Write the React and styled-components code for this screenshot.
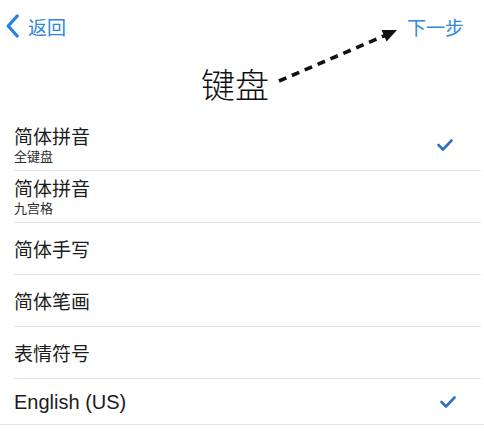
import React from "react";
import styled, { createGlobalStyle } from "styled-components";

const GlobalStyle = createGlobalStyle`
  html, body {
    margin: 0;
    padding: 0;
    background: #ffffff;
  }
  body {
    font-family: "Liberation Sans", "Noto Sans CJK SC", sans-serif;
  }
`;

const StyledPage = styled.div`
  width: 484px;
  height: 431px;
  overflow: hidden;
  background-color: #ffffff;
`;

const StyledHeader = styled.div`
  position: relative;
  height: 119px;
  display: flex;
  flex-direction: column;
`;

const StyledNavBar = styled.div`
  height: 52px;
  display: flex;
  align-items: center;
  justify-content: space-between;
  padding: 0 20px 0 6px;
  box-sizing: border-box;
`;

const StyledNavButton = styled.div`
  display: flex;
  align-items: center;
  gap: 9px;
  font-family: "Noto Sans CJK SC", sans-serif;
  font-size: 19px;
  color: #2f86de;
  line-height: 1;
`;

const StyledTitle = styled.div`
  flex: 1;
  display: flex;
  align-items: center;
  justify-content: center;
  padding-right: 14px;
  padding-bottom: 4px;
  font-family: "Noto Sans CJK SC", sans-serif;
  font-size: 34px;
  font-weight: 300;
  color: #111111;
`;

const StyledArrow = styled.svg`
  position: absolute;
  left: 0;
  top: 0;
  pointer-events: none;
`;

const StyledList = styled.div`
  display: flex;
  flex-direction: column;
`;

const StyledRow = styled.div`
  height: ${(p) => (p.$last ? 46 : 52)}px;
  margin-left: ${(p) => (p.$last ? 0 : 14)}px;
  padding-left: ${(p) => (p.$last ? 14 : 0)}px;
  padding-right: 28px;
  margin-right: ${(p) => (p.$last ? 0 : 3)}px;
  box-sizing: border-box;
  display: flex;
  align-items: center;
  justify-content: space-between;
  border-bottom: 1px solid #e4e4e4;
`;

const StyledLabels = styled.div`
  display: flex;
  flex-direction: column;
  gap: 4px;
`;

const StyledLabel = styled.div`
  font-family: ${(p) =>
    p.$latin
      ? `"Liberation Sans", sans-serif`
      : `"Noto Sans CJK SC", sans-serif`};
  font-size: ${(p) => (p.$latin ? 20 : 19)}px;
  color: #1c1c1c;
  line-height: ${(p) => (p.$sub ? 19 : 24)}px;
`;

const StyledSubLabel = styled.div`
  font-family: "Noto Sans CJK SC", sans-serif;
  font-size: 13px;
  color: #2c2c2c;
  line-height: 14px;
`;

const items = [
  { title: "简体拼音", sub: "全键盘", checked: true },
  { title: "简体拼音", sub: "九宫格" },
  { title: "简体手写" },
  { title: "简体笔画" },
  { title: "表情符号" },
  { title: "English (US)", checked: true, latin: true },
];

function Check() {
  return (
    <svg width="16" height="12" viewBox="0 0 16 12">
      <polyline
        points="1.5,6 6,10.5 14.5,1.5"
        fill="none"
        stroke="#2f6fc6"
        strokeWidth="2.6"
        strokeLinecap="round"
        strokeLinejoin="round"
      />
    </svg>
  );
}

function Chevron() {
  return (
    <svg width="13" height="24" viewBox="0 0 13 24">
      <polyline
        points="11.2,2 2.2,12 11.2,22"
        fill="none"
        stroke="#2a80e0"
        strokeWidth="3.3"
        strokeLinecap="round"
        strokeLinejoin="round"
      />
    </svg>
  );
}

export default function App() {
  return (
    <StyledPage>
      <GlobalStyle />
      <StyledHeader>
        <StyledNavBar>
          <StyledNavButton>
            <Chevron />
            <span>返回</span>
          </StyledNavButton>
          <StyledNavButton>下一步</StyledNavButton>
        </StyledNavBar>
        <StyledTitle>键盘</StyledTitle>
        <StyledArrow width="484" height="119" viewBox="0 0 484 119">
          <line
            x1="279"
            y1="81"
            x2="385"
            y2="35.5"
            stroke="#111111"
            strokeWidth="3.6"
            strokeDasharray="8 6"
          />
          <polygon points="397,30 386.6,41.5 381.6,30" fill="#111111" />
        </StyledArrow>
      </StyledHeader>
      <StyledList>
        {items.map((item, i) => (
          <StyledRow key={i} $last={i === items.length - 1}>
            <StyledLabels>
              <StyledLabel $latin={item.latin} $sub={!!item.sub}>
                {item.title}
              </StyledLabel>
              {item.sub && <StyledSubLabel>{item.sub}</StyledSubLabel>}
            </StyledLabels>
            {item.checked && <Check />}
          </StyledRow>
        ))}
      </StyledList>
    </StyledPage>
  );
}
